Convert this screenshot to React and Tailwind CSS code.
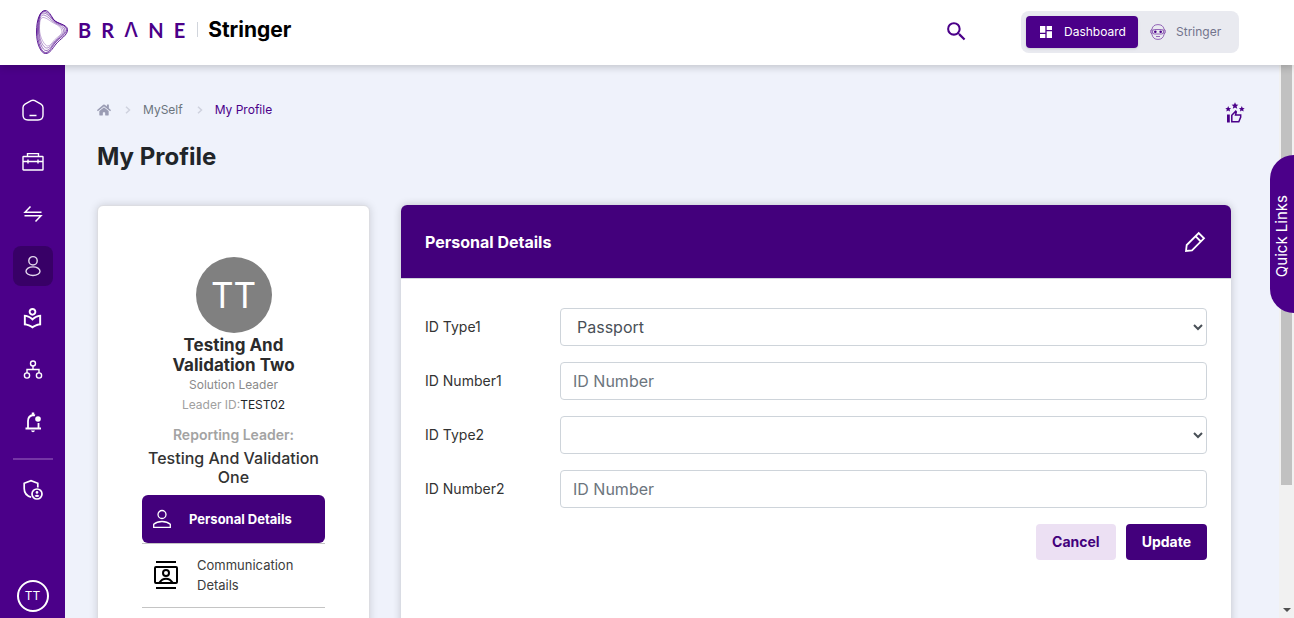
import { FaHome } from 'react-icons/fa';
import { MdSearch, MdDashboard, MdOutlineLocalLibrary } from 'react-icons/md';

function BraneMark() {
  return (
    <svg viewBox="0 0 32 44" className="h-11 w-8" fill="none" stroke="#4b0089" strokeWidth="0.7" aria-hidden="true">
      <path d="M9 .5C13 .5 15 6 18 10S31 14 31.500 19.500 24 29 20 34 14 43.500 9.500 43.500 .5 34 .5 22 4 .5 9 .5Z" strokeWidth="0.900" />
      <path d="M8.500 1.500C12.500 2 15 7.500 18.500 10.500S30 15 30.500 19.500 23 28 19 33 13.500 42.500 9.500 42.500 1.500 33 1.500 21 4.500 1 8.500 1.500Z" />
      <path d="M8 3C12 3.500 15 9 18.500 11.500S28.500 15.500 29 20 22 28 18.500 32.500 13.500 40.500 10 40.500 2.500 32 2.500 20 4 2.500 8 3Z" opacity="0.8" />
      <path d="M8 5C12 6 15 10.500 18.500 12.500S27 16.500 27.500 20.500 21.500 28 18 32 13.500 38 10.500 38 3 30 3 19.500 4.500 4.500 8 5Z" opacity="0.65" />
      <path d="M8 7.500C12 8.500 15 12 18.500 13.500S25.500 17.500 26 21 20.500 27.500 18 30.500 14 36 11.500 36 3.500 28 3.500 18.500 5 7 8 7.500Z" opacity="0.45" />
    </svg>
  );
}

function Icon({ children, className = 'size-[22px]', width = 1.4 }) {
  return (
    <svg viewBox="0 0 22 22" className={className} fill="none" stroke="currentColor" strokeWidth={width} aria-hidden="true">
      {children}
    </svg>
  );
}

const HomeIcon = () => (
  <Icon>
    <path d="M3 5.200 9.200 1.700Q11 .7 12.800 1.700L19 5.200Q21 6.400 21 8.500V16Q21 21 16 21H6Q1 21 1 16V8.500Q1 6.400 3 5.200Z" />
    <path d="M7.500 16.500h7" strokeWidth="1.500" />
  </Icon>
);
const CaseIcon = () => (
  <Icon>
    <rect x="1" y="5.500" width="20" height="13.500" rx="0.500" />
    <path d="M5.500 5.500V2.600h11v2.900M1 10.500h20M6 8.500v4M16 8.500v4" />
  </Icon>
);
const SwapIcon = () => (
  <Icon width={1.500}>
    <path d="M8.500 3.500 3 9.300h16.500M2.500 12.700H19L13.500 18.500" />
  </Icon>
);
const UserIcon = () => (
  <Icon>
    <circle cx="11" cy="5.800" r="4.200" />
    <ellipse cx="11" cy="16.200" rx="7" ry="4.300" />
  </Icon>
);
const TreeIcon = () => (
  <Icon>
    <circle cx="11" cy="4.500" r="2.500" />
    <circle cx="5" cy="16.500" r="2.600" />
    <circle cx="17" cy="16.500" r="2.600" />
    <path d="M11 7v3.500M5 14v-3.500h12V14" />
  </Icon>
);
const BellIcon = () => (
  <Icon width={1.800}>
    <path d="M3.500 17.500h15.500M6 17.500V10q0-5 5-6 1 0 2 .4M16.500 12v5.500" />
    <path d="M11 1.500v2" strokeWidth="2.500" />
    <circle cx="16" cy="8" r="2.800" fill="currentColor" stroke="none" />
    <path d="M9 19.500h4q-.5 1.700-2 1.700t-2-1.700Z" fill="currentColor" stroke="none" />
  </Icon>
);
const ShieldIcon = () => (
  <Icon width={1.700}>
    <path d="M15.800 8.500V4.300L9 1.700 2.200 4.300V9.500C2.200 13.800 5 17 9.200 18.300" />
    <circle cx="15" cy="15" r="5" />
    <circle cx="15" cy="13.400" r="1.300" fill="currentColor" stroke="none" />
    <path d="M12.500 17q2.500-2.500 5 0-2.500 2-5 0Z" fill="currentColor" stroke="none" />
  </Icon>
);
const LibraryIcon = () => <MdOutlineLocalLibrary className="size-[23px]" />;

const navItems = [
  ['Home', HomeIcon],
  ['Work', CaseIcon],
  ['Exchange', SwapIcon],
  ['Myself', UserIcon],
  ['Learning', LibraryIcon],
  ['Organisation', TreeIcon],
  ['Notifications', BellIcon],
];

function Header() {
  return (
    <header className="relative z-10 flex h-[65px] shrink-0 items-center bg-white pr-[55px] pb-0.5 pl-9 shadow-[0_2px_8px_rgba(0,0,0,0.2)]">
      <a href="#home" className="flex items-center" aria-label="Brane Stringer">
        <BraneMark />
        <span className="flex items-center pb-1">
          <span className="ml-2.5 flex gap-2.5 font-['Lato'] text-[20px] leading-6 font-bold text-[#4b0089]">
            <span>B</span>
            <span>R</span>
            <span className="font-['Inter'] font-medium">Λ</span>
            <span>N</span>
            <span>E</span>
          </span>
          <span className="ml-3 h-[15px] w-px bg-gray-300" />
          <span className="ml-2.5 text-[21px] leading-6 font-bold text-black">Stringer</span>
        </span>
      </a>
      <button type="button" aria-label="Search" className="mr-[52px] ml-auto text-[#4b0089]">
        <MdSearch className="size-[25px]" />
      </button>
      <div className="flex h-[42px] items-center rounded-lg bg-[#e9eaf0] px-[5px] text-xs">
        <button type="button" className="flex h-8 w-28 items-center gap-2.5 rounded bg-[#4b0089] pl-3 text-white shadow-sm">
          <MdDashboard className="size-4" />
          Dashboard
        </button>
        <button type="button" className="flex h-8 w-24 items-center gap-2.5 pl-3 text-[#72748c]">
          <svg viewBox="0 0 16 16" className="size-4" fill="none" stroke="#7d45a8" strokeWidth="0.800" aria-hidden="true">
            <path d="M2 5Q3 .6 8 .6T14 5v5.500Q13 15.400 8 15.400T2 10.500Z" />
            <path d="M2 5.500Q.6 5.500.6 7.500T2 10M14 5.500q1.400 0 1.400 2T14 10M6 12.500h4" />
            <rect x="2.500" y="5.500" width="11" height="4.500" rx="2" />
            <circle cx="5.300" cy="7.700" r="1.300" fill="#4b0089" stroke="none" />
            <circle cx="10.700" cy="7.700" r="1.300" fill="#4b0089" stroke="none" />
          </svg>
          Stringer
        </button>
      </div>
    </header>
  );
}

function Sidebar() {
  return (
    <nav className="flex w-[65px] shrink-0 flex-col items-center bg-[#4b0089] pt-[25px] pb-1.5 text-white">
      <div className="flex flex-col gap-3">
        {navItems.map(([label, Glyph]) => (
          <a
            key={label}
            href={'#' + label.toLowerCase()}
            aria-label={label}
            className={
              label === 'Myself'
                ? 'flex size-10 items-center justify-center rounded-lg bg-[#380067] text-[#e4d8ee]'
                : 'flex size-10 items-center justify-center rounded-lg'
            }
          >
            <Glyph />
          </a>
        ))}
      </div>
      <hr className="mt-4 w-10 border-t-2 border-[#7536a5]" />
      <a href="#admin" aria-label="Administration" className="mt-2.5 flex size-10 items-center justify-center">
        <ShieldIcon />
      </a>
      <button type="button" className="mt-auto size-8 rounded-full border-2 border-white text-xs">TT</button>
    </nav>
  );
}

function Chevron() {
  return (
    <svg viewBox="0 0 6 8" className="mr-3 ml-3.5 h-2 w-1.5" fill="none" stroke="#cfd2de" strokeWidth="1.500" aria-hidden="true">
      <path d="M1 .7 4.500 4 1 7.300" />
    </svg>
  );
}

function RatingIcon() {
  const star = 'M0-3.500 1-1.200 3.400-1 1.600.6 2.200 3 0 1.700-2.200 3-1.600.6-3.400-1-1-1.200Z';
  return (
    <svg viewBox="0 0 20 21" className="h-[21px] w-5" fill="#4b0089" aria-hidden="true">
      <path d={star} transform="translate(10 3.700)" />
      <path d={star} transform="translate(3.200 7) scale(.85)" />
      <path d={star} transform="translate(16.800 7) scale(.85)" />
      <path d="M2 12.500h2.800V20.500H2Z" />
      <path d="M6.800 19.700V13.200L10.700 9.200 11.300 10 10.500 13H15.700V15L13.800 19.700Z" fill="none" stroke="#4b0089" strokeWidth="1.500" />
    </svg>
  );
}

function ContactIcon() {
  return (
    <svg viewBox="0 0 28 28" className="size-7 shrink-0" fill="none" stroke="#000" strokeWidth="2" aria-hidden="true">
      <path d="M4 1h20M4 27h20" />
      <rect x="3" y="6" width="22" height="16" rx="1" />
      <circle cx="14" cy="12" r="3" />
      <path d="M7.500 21.500Q10 17.700 14 17.700t6.500 3.800" />
    </svg>
  );
}

function ProfileCard() {
  return (
    <aside className="rounded-md border border-[#dcdde2] bg-white px-11 pt-[51px] shadow-[0_0_8px_rgba(0,0,0,0.15)]">
      <div className="flex flex-col items-center text-center">
        <div className="flex size-[76px] items-center justify-center rounded-full bg-[#808080] text-[35px] text-white">TT</div>
        <h2 className="mt-0.5 text-[17px] leading-5 font-bold text-[#2b2b2b]">Testing And Validation Two</h2>
        <p className="text-xs leading-5 text-[#8a8a8a]">Solution Leader</p>
        <p className="text-xs leading-5 text-[#a0a0a0]">
          Leader ID:<span className="text-[#212529]">TEST02</span>
        </p>
        <p className="mt-2 text-sm leading-6 font-semibold text-[#a3a3a3]">Reporting Leader:</p>
        <p className="mt-0.5 text-base leading-[19px] font-medium text-[#333]">Testing And Validation One</p>
      </div>
      <ul className="mt-2 text-[13px] leading-5">
        <li className="border-b border-[#c4c4c4]">
          <a href="#personal" className="flex h-12 items-center gap-[17px] rounded-md bg-[#43007c] pl-2.5 font-bold text-white">
            <svg viewBox="0 0 20 20" className="size-5" fill="none" stroke="currentColor" strokeWidth="1.300" aria-hidden="true">
              <circle cx="10" cy="5.500" r="4" />
              <path d="M1.700 18.300v-3q3-2.800 8.300-2.800t8.300 2.800v3Z" />
            </svg>
            Personal Details
          </a>
        </li>
        <li className="border-b border-[#c4c4c4]">
          <a href="#communication" className="flex items-center gap-[17px] py-[11px] pb-3 pl-2.5 text-[#3c3c3c]">
            <ContactIcon />
            Communication Details
          </a>
        </li>
      </ul>
    </aside>
  );
}

const controlClass =
  'h-[38px] w-full rounded border border-[#ced4da] bg-white px-3 text-base text-[#495057] placeholder:text-[#6c757d]';

function Field({ id, label, children }) {
  return (
    <div className="flex items-center">
      <label htmlFor={id} className="w-[135px] shrink-0 text-sm text-[#333]">{label}</label>
      {children}
    </div>
  );
}

function DetailsCard() {
  return (
    <section className="rounded-md bg-white shadow-[0_0_8px_rgba(0,0,0,0.2)]">
      <div className="flex h-[73px] items-center justify-between rounded-t-md bg-[#43007c] px-6 text-white">
        <h2 className="text-base font-bold">Personal Details</h2>
        <button type="button" aria-label="Edit personal details">
          <svg viewBox="0 0 24 24" className="size-6" fill="none" stroke="currentColor" strokeWidth="1.800" aria-hidden="true">
            <path d="M3 21 3.700 15 15.700 3 21 8.300 9 20.300ZM12.500 6.200 17.800 11.500" />
          </svg>
        </button>
      </div>
      <form className="flex flex-col gap-4 border-t border-gray-300 px-6 pt-[29px]" onSubmit={(e) => e.preventDefault()}>
        <Field id="type1" label="ID Type1">
          <select id="type1" className={controlClass} defaultValue="Passport">
            <option>Passport</option>
          </select>
        </Field>
        <Field id="number1" label="ID Number1">
          <input id="number1" type="text" placeholder="ID Number" className={controlClass} />
        </Field>
        <Field id="type2" label="ID Type2">
          <select id="type2" className={controlClass} defaultValue="">
            <option value=""></option>
          </select>
        </Field>
        <Field id="number2" label="ID Number2">
          <input id="number2" type="text" placeholder="ID Number" className={controlClass} />
        </Field>
        <div className="flex justify-end gap-2.5 text-sm font-bold">
          <button type="button" className="h-9 rounded bg-[#ece0f3] px-4 text-[#43007c]">Cancel</button>
          <button type="submit" className="h-9 rounded bg-[#43007c] px-4 text-white">Update</button>
        </div>
      </form>
    </section>
  );
}

export default function App() {
  return (
    <div className="relative flex h-screen flex-col overflow-hidden bg-[#eff2fb] font-['Inter',sans-serif]">
      <Header />
      <div className="flex min-h-0 flex-1">
        <Sidebar />
        <main className="min-w-0 flex-1 overflow-hidden pr-12 pl-8">
          <div className="-mr-3.5 flex items-start justify-between pt-[37px]">
            <nav aria-label="Breadcrumb" className="flex items-center text-xs">
              <a href="#home" aria-label="Home" className="text-[#9a9cb3]"><FaHome className="size-3.5" /></a>
              <Chevron />
              <a href="#myself" className="text-[#6c757d]">MySelf</a>
              <Chevron />
              <span className="text-[#4b0089]">My Profile</span>
            </nav>
            <button type="button" aria-label="Rate"><RatingIcon /></button>
          </div>
          <h1 className="mt-[18px] text-2xl leading-8 font-bold text-[#212529]">My Profile</h1>
          <div className="mt-8 grid min-h-[600px] grid-cols-[273px_1fr] gap-[31px]">
            <ProfileCard />
            <DetailsCard />
          </div>
        </main>
        <div className="flex w-[15px] shrink-0 flex-col items-center bg-[#f1f1f1]" aria-hidden="true">
          <div className="h-[76%] w-[11px] bg-[#c1c1c1]" />
          <svg viewBox="0 0 8 4" className="mt-auto mb-1.5 h-1 w-2" fill="#505050"><path d="M0 0h8L4 4Z" /></svg>
        </div>
      </div>
      <button
        type="button"
        className="absolute top-[155px] right-0 flex h-[158px] w-6 items-center justify-center rounded-l-3xl bg-[#4b0089] pt-1 text-[15px] text-white"
      >
        <span className="rotate-180 [writing-mode:vertical-rl]">Quick Links</span>
      </button>
    </div>
  );
}
